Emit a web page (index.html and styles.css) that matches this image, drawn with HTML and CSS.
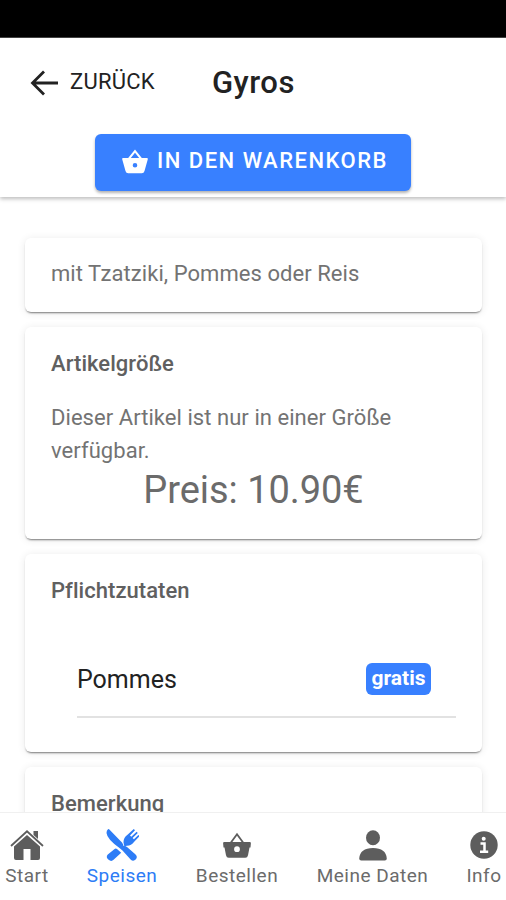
FILE: index.html
```html
<!DOCTYPE html>
<html lang="de">
<head>
<meta charset="utf-8">
<title>Gyros</title>
<link rel="stylesheet" href="styles.css">
</head>
<body>
<div class="app">
  <div class="statusbar"></div>
  <header class="header">
    <div class="toolbar">
      <a class="back">
        <svg class="back-icon" viewBox="0 0 28 26" fill="none" stroke="currentColor" stroke-width="2.8"><path d="M14 1.500 2.500 13 14 24.500M2.500 13H28"/></svg>
        <span class="back-label">ZURÜCK</span>
      </a>
      <h1 class="title">Gyros</h1>
    </div>
    <button class="cart-button">
      <svg class="cart-icon" viewBox="0 0 26 25"><path fill="currentColor" fill-rule="evenodd" d="M1 9H6.200L13 .5l6.800 8.500H25q1 0 .8 1.200L22.500 22q-.6 2.300-2.700 2.300H6.200Q4.100 24.300 3.500 22L.2 10.200Q0 9 1 9ZM8.800 9H17.200L13 3.800ZM13 14a2.300 2.300 0 1 0 0 4.600 2.300 2.300 0 0 0 0-4.600Z"/></svg>
      <span class="cart-label">IN DEN WARENKORB</span>
    </button>
  </header>
  <main class="content">
    <section class="card card-description"><p class="text">mit Tzatziki, Pommes oder Reis</p></section>
    <section class="card card-size">
      <h2 class="card-title">Artikelgröße</h2>
      <p class="text size-text">Dieser Artikel ist nur in einer Größe verfügbar.</p>
      <p class="price">Preis: 10.90€</p>
    </section>
    <section class="card card-required">
      <h2 class="card-title">Pflichtzutaten</h2>
      <div class="item"><span class="item-name">Pommes</span><span class="badge">gratis</span></div>
    </section>
    <section class="card card-note"><h2 class="card-title">Bemerkung</h2></section>
  </main>
  <nav class="tabs">
    <a class="tab tab-start"><svg class="tab-icon" viewBox="0 0 34 32" fill="currentColor"><path d="M17 6 30 17.500V29q0 2-2 2h-7.500V20h-7v11H6q-2 0-2-2V17.500Z"/><path d="M23.500 2h4.500v8l-4.500-4Z"/><path fill="none" stroke="currentColor" stroke-width="1.800" stroke-linecap="round" d="M1.500 16.500 17 2.300l15.500 14.200"/></svg><span class="tab-label">Start</span></a>
    <a class="tab tab-speisen active"><svg class="tab-icon" viewBox="0 0 34 34" fill="currentColor"><path d="M3 1.200Q3.800.8 4.600 1.700L17 14.500q1.500 2 1.500 3.500 2-.2 3.500 1l8.300 7.200q2.700 2.500.6 5.100-2.600 2.600-5.300.1L17.500 22.500 14.500 20Q2 11 1.500 5q0-2.500 1.500-3.800Z"/><path d="m12 21 4.200 3.800-7.600 7q-2.300 2.200-5 0-3.200-2.700-.8-5.400l6.500-5.200q1.400-1.100 2.700-.2Z"/><path d="M18.500 14.500Q18.400 9.600 22.500 6.800L28.800 1l1.200 1.200-5 5.400 1.300 1.200 5.300-5.100 1.200 1.200-5.200 5.200 1.300 1.200 4.500-4.300 1.200 1.200-5.400 5.500q-3 4.200-7.700 4l-2 1.500Z"/></svg><span class="tab-label">Speisen</span></a>
    <a class="tab tab-bestellen"><svg class="tab-icon" viewBox="0 0 28 26"><path fill="currentColor" fill-rule="evenodd" d="M1.300 10H7.200L14 .8 20.800 10H26.700q1.300 0 1.200 1.300l-.4 4.200H26.500L25 23.300q-.5 2.500-2.700 2.500H5.700q-2.200 0-2.700-2.500L1.500 15.500H.5L.1 11.300Q0 10 1.300 10ZM9.400 10h9.200L14 3.700ZM14 14.300a2.900 2.900 0 1 0 0 5.800 2.900 2.900 0 0 0 0-5.800Z"/></svg><span class="tab-label">Bestellen</span></a>
    <a class="tab tab-daten"><svg class="tab-icon" viewBox="0 0 28 31" fill="currentColor"><ellipse cx="14" cy="7.800" rx="7" ry="7.500"/><path d="M.2 28.500Q1 18 14 18t13.800 10.500q0 2-2 2H2.200q-2 0-2-2Z"/></svg><span class="tab-label">Meine Daten</span></a>
    <a class="tab tab-info"><svg class="tab-icon" viewBox="0 0 28 28"><circle cx="14" cy="14" r="13.700" fill="currentColor"/><circle cx="13.700" cy="7.800" r="2" fill="#fff"/><path fill="none" stroke="#fff" stroke-width="2.500" d="M10.500 12.500h4V20.500M10 20.700h8.200"/></svg><span class="tab-label">Info</span></a>
  </nav>
</div>
</body>
</html>
```

FILE: styles.css
```css
* { box-sizing: border-box; }
body { margin: 0; background: #fff; font-family: Roboto, "Liberation Sans", sans-serif; }
h1, h2, p { margin: 0; font-weight: 400; }
svg { display: block; flex: none; }
span, h1, h2, .price { white-space: nowrap; }

.app { height: 900px; display: flex; flex-direction: column; overflow: hidden; }
.statusbar { flex: none; height: 38px; background: #000; border-bottom: 1px solid #444; }

.header { flex: none; height: 159px; display: flex; flex-direction: column; align-items: center; box-shadow: 0 2px 4px rgba(0,0,0,.26); }
.toolbar { width: 100%; height: 96px; padding-left: 30px; display: flex; align-items: flex-start; color: #222; }
.back { display: flex; align-items: center; height: 90px; width: 182px; gap: 12px; }
.back-icon { width: 28px; height: 26px; color: #222; }
.back-label { font-size: 22px; line-height: 26px; letter-spacing: .25px; padding-bottom: 3px; }
.title { font-size: 31px; line-height: 36px; font-weight: 500; letter-spacing: .5px; padding-top: 27px; }
.cart-button { width: 316px; height: 57px; border: 0; border-radius: 6px; padding: 0 0 3px 27px; background: #3880ff; color: #fff; display: flex; align-items: center; gap: 9px; font-family: inherit; box-shadow: 0 2px 3px rgba(0,0,0,.3); }
.cart-icon { width: 26px; height: 25px; }
.cart-label { font-size: 22px; line-height: 26px; font-weight: 500; letter-spacing: 1.5px; }

.content { flex: 1; min-height: 0; overflow: hidden; padding: 41px 24px 0 25px; display: flex; flex-direction: column; gap: 15px; }
.card { flex: none; background: #fff; border-radius: 6px; padding: 0 26px; color: #737373; box-shadow: 0 2px 2px -1px rgba(0,0,0,.5), 0 1px 8px rgba(0,0,0,.09); }
.text { font-size: 22px; line-height: 33px; letter-spacing: .05px; }
.card-title { font-size: 22px; line-height: 26px; font-weight: 500; letter-spacing: .05px; color: #606060; }
.card-description { height: 74px; padding-top: 19px; }
.card-size { height: 212px; padding-top: 24px; }
.size-text { padding-top: 24px; }
.price { font-size: 38px; line-height: 45px; padding-top: 1px; text-align: center; letter-spacing: -.05px; color: #6b6b6b; }
.card-required { height: 198px; padding-top: 24px; }
.item { margin: 37px 0 0 26px; height: 77px; display: flex; align-items: center; justify-content: space-between; border-bottom: 2px solid #e2e2e2; padding-right: 25px; }
.item-name { font-size: 25px; line-height: 30px; color: #222; padding-top: 2px; }
.badge { width: 65px; height: 32px; border-radius: 6px; background: #3880ff; color: #fff; font-size: 21px; line-height: 31px; font-weight: 700; text-align: center; }
.card-note { height: 150px; padding-top: 24px; }

.tabs { position: relative; flex: none; height: 88px; border-top: 1px solid #f0f0f0; background: #fff; color: #5d5d5d; display: flex; }
.tab { flex: none; display: flex; flex-direction: column; align-items: center; justify-content: flex-end; gap: 3px; padding-bottom: 12px; }
.tab-label { font-size: 19px; line-height: 24px; letter-spacing: .5px; color: #6b6b6b; }
.active, .active .tab-label { color: #2d7cf6; }
.tab-start { width: 54px; }
.tab-speisen { width: 136px; }
.tab-bestellen { width: 94px; }
.tab-daten { width: 177px; }
.tab-info { width: 46px; }
.tab-start .tab-icon { width: 34px; height: 32px; }
.tab-speisen .tab-icon { width: 34px; height: 34px; margin-bottom: -1px; }
.tab-bestellen .tab-icon { width: 28px; height: 26px; margin-bottom: 3px; }
.tab-daten .tab-icon { width: 28px; height: 31px; }
.tab-info .tab-icon { width: 28px; height: 28px; margin-bottom: 2px; }
```
